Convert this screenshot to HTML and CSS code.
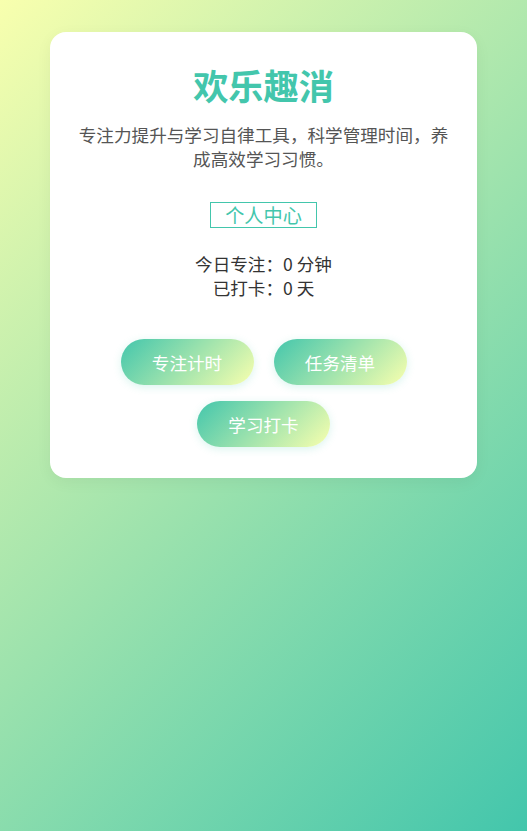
FILE: index.html
```html
<!DOCTYPE html>
<html lang="zh-CN">
<head>
<meta charset="utf-8">
<title>欢乐趣消</title>
<link rel="stylesheet" href="styles.css">
</head>
<body>
<div class="page">
  <main class="card">
    <h1 class="title">欢乐趣消</h1>
    <p class="desc">专注力提升与学习自律工具，科学管理时间，养成高效学习习惯。</p>
    <div class="center-wrap"><span class="center-link">个人中心</span></div>
    <div class="stats">
      <div>今日专注：0 分钟</div>
      <div>已打卡：0 天</div>
    </div>
    <div class="actions">
      <button class="btn">专注计时</button>
      <button class="btn">任务清单</button>
      <button class="btn">学习打卡</button>
    </div>
  </main>
</div>
</body>
</html>
```

FILE: styles.css
```css
html, body {
  margin: 0;
  padding: 0;
}
body {
  min-height: 100vh;
  background: linear-gradient(135deg, #f8ffae 0%, #43c6ac 100%);
  font-family: "Noto Sans CJK SC", "Noto Sans", sans-serif;
}
.page {
  padding-top: 32px;
  display: flex;
  justify-content: center;
}
.card {
  width: 427px;
  box-sizing: border-box;
  background: #fff;
  border-radius: 16px;
  padding: 32px 28px 23px;
  text-align: center;
  box-shadow: 0 4px 16px rgba(0, 0, 0, 0.05);
}
.title {
  margin: 0;
  font-size: 35.2px;
  line-height: 42px;
  font-weight: 700;
  color: #43c6ac;
}
.desc {
  margin: 17px 0 0;
  font-size: 17.6px;
  line-height: 24px;
  color: #555;
}
.center-wrap {
  margin-top: 31px;
}
.center-link {
  display: inline-block;
  border: 1px solid #43c6ac;
  color: #43c6ac;
  font-size: 19.2px;
  line-height: 24px;
  padding: 0 14px;
}
.stats {
  margin-top: 24px;
  font-size: 17.6px;
  line-height: 24px;
  color: #333;
}
.actions {
  margin-top: 31px;
  display: flex;
  flex-wrap: wrap;
  justify-content: center;
}
.btn {
  margin: 8px 10px;
  width: 133px;
  height: 46px;
  border: none;
  border-radius: 23px;
  background: linear-gradient(135deg, #43c6ac 0%, #f8ffae 100%);
  color: #fff;
  font-family: "Noto Sans CJK SC", "Noto Sans", sans-serif;
  font-size: 17.6px;
  box-shadow: 0 2px 8px rgba(67, 198, 172, 0.2);
  cursor: pointer;
}
```
